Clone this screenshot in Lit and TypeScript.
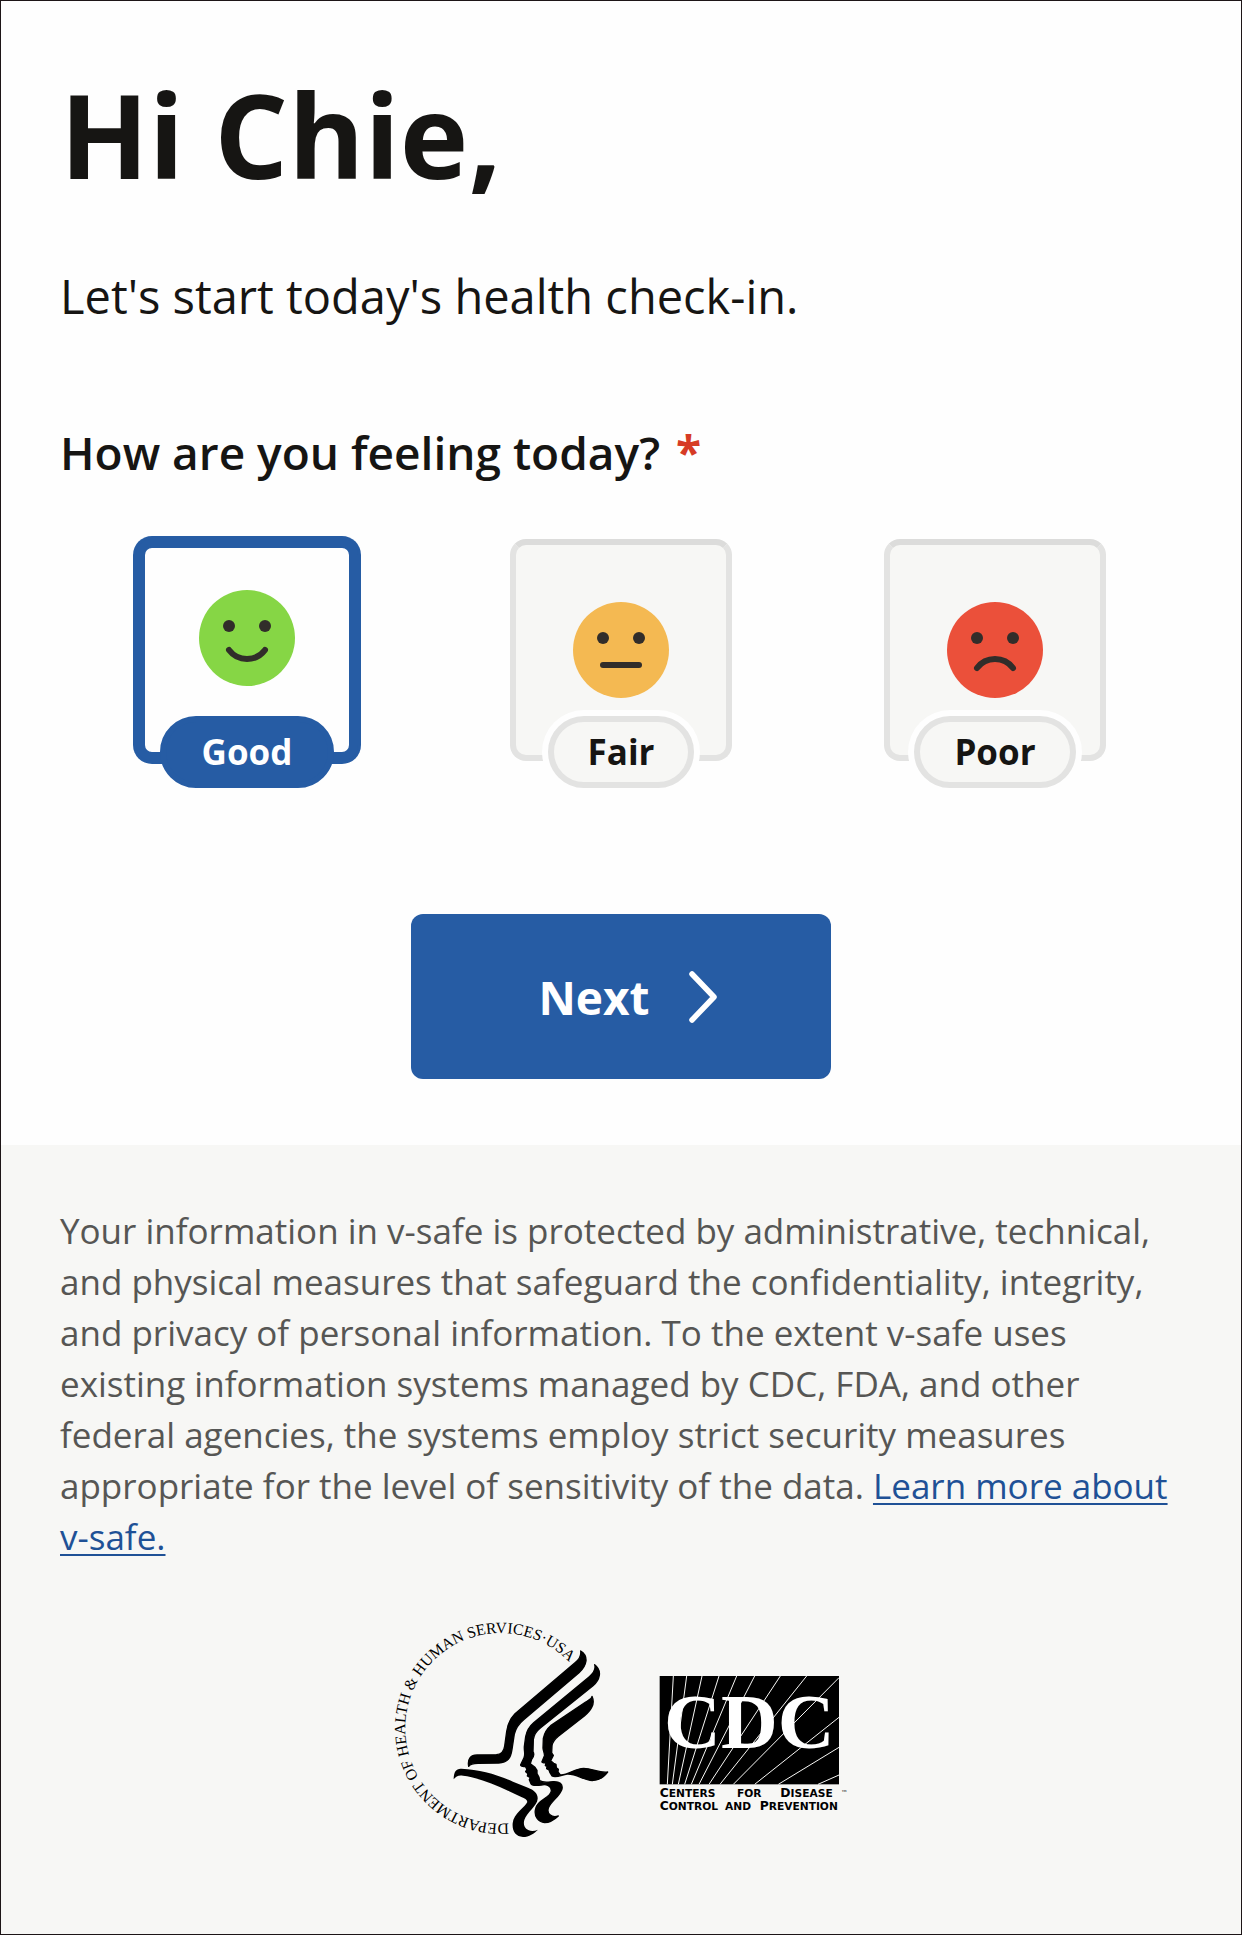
import { LitElement, html, css, svg } from "lit";
import { customElement, property, state } from "lit/decorators.js";

type Mood = "good" | "fair" | "poor";

const MOODS: { id: Mood; label: string }[] = [
  { id: "good", label: "Good" },
  { id: "fair", label: "Fair" },
  { id: "poor", label: "Poor" },
];

const MOUTHS: Record<Mood, string> = {
  good: "M30 60A22.5 22.5 0 0 0 66 60",
  fair: "M30 63H66",
  poor: "M30 66A22.5 22.5 0 0 1 66 66",
};

@customElement("mood-face")
export class MoodFace extends LitElement {
  static styles = css`
    :host {
      display: block;
      width: 96px;
      height: 96px;
    }
    .face {
      display: block;
      width: 100%;
      height: 100%;
    }
    .good {
      fill: #86d645;
    }
    .fair {
      fill: #f4b952;
    }
    .poor {
      fill: #eb503a;
    }
    .eye {
      fill: #312d2a;
    }
    .mouth {
      fill: none;
      stroke: #312d2a;
      stroke-width: 6;
      stroke-linecap: round;
    }
  `;

  @property() mood: Mood = "good";

  render() {
    return html`<svg class="face" viewBox="0 0 96 96" aria-hidden="true">
      <circle class=${this.mood} cx="48" cy="48" r="48"></circle>
      <circle class="eye" cx="30" cy="36" r="6"></circle>
      <circle class="eye" cx="66" cy="36" r="6"></circle>
      <path class="mouth" d=${MOUTHS[this.mood]}></path>
    </svg>`;
  }
}

const RAYS = [
  [85, 373, 103, 48],
  [100, 373, 143, 48],
  [118, 373, 189, 48],
  [137, 373, 240, 48],
  [157, 373, 293, 48],
  [180, 373, 347, 48],
  [210, 373, 424, 48],
  [243, 373, 503, 48],
  [283, 373, 600, 53],
  [347, 373, 600, 172],
  [418, 373, 600, 262],
  [537, 373, 600, 345],
];

@customElement("agency-logos")
export class AgencyLogos extends LitElement {
  static styles = css`
    :host {
      display: flex;
      justify-content: center;
      align-items: flex-end;
      gap: 46px;
    }
    .hhs {
      width: 220px;
      height: 220px;
      overflow: visible;
    }
    .cdc {
      width: 190px;
      height: 165px;
      overflow: visible;
    }
    .ring {
      font: 47px "Liberation Serif", serif;
    }
    .wing {
      stroke: #000;
      stroke-width: 4;
      stroke-linejoin: round;
    }
    .letters {
      font: bold 236px "Liberation Serif", serif;
      fill: #fff;
    }
    .initial {
      font: bold 37px "DejaVu Sans", sans-serif;
    }
    .rest {
      font-size: 32px;
    }
    .mark {
      font: 20px "DejaVu Sans", sans-serif;
    }
    .ray {
      stroke: #f7f7f5;
      stroke-width: 3;
    }
  `;

  render() {
    return html`
      <svg class="hhs" viewBox="40 60 660 660" role="img" aria-label="Department of Health &amp; Human Services USA">
        <defs>
          <path id="ring" d="M387 670A286 286 0 1 1 600 225"></path>
        </defs>
        <text class="ring"><textPath href="#ring">DEPARTMENT OF HEALTH &amp; HUMAN SERVICES·USA</textPath></text>
        <path
          class="wing"
          d="M603 153C615 160 620 170 619 183C617 197 611 207 598 218L432 359C415 373 408 386 404 402L397 448C393 475 384 488 357 489L295 490C278 490 271 493 267 499C263 477 273 465 292 465L350 464C367 463 373 453 375 438L381 395C384 372 390 357 406 341L586 188C602 176 605 166 603 153Z"
        ></path>
        <path
          class="wing"
          d="M645 194C657 203 661 212 659 226C657 238 651 248 640 257L482 384C467 396 463 405 461 418L460 455C465 464 461 472 456 478L452 491L466 502L472 511L472 521L478 532L480 542C490 549 505 546 520 545C540 544 550 551 547 567C541 588 515 603 507 622C499 640 516 655 536 648C523 660 512 668 495 668C475 665 464 650 467 630C470 600 512 595 515 573C516 558 500 551 485 555C470 557 455 558 453 549L449 539L452 533L443 528L445 521L438 515L442 508L437 499C428 501 422 497 423 494L433 473C438 462 433 454 434 440L438 410C441 393 448 380 462 368L629 230C642 219 649 207 645 194Z"
        ></path>
        <path
          class="wing"
          d="M637 289C641 298 642 312 636 322C632 330 624 339 614 348L536 409C524 419 518 425 517 438L516 459L521 466L513 482L522 490L529 493L530 503L536 508L535 516L542 525C565 527 585 505 612 505C640 506 660 520 684 516C674 529 661 542 638 542C610 540 590 520 562 522C545 525 530 534 517 528L511 518L508 510L501 506L502 499L497 497L499 488C492 490 486 487 487 485L494 468C496 460 490 452 490 444L491 415C494 400 500 388 513 377L618 306C632 298 637 296 637 289Z"
        ></path>
        <path
          d="M222 538C222 515 230 505 245 506C300 509 350 522 400 545L445 563C463 570 475 580 474 596C473 618 441 636 434 660C427 685 448 700 475 689C464 700 448 711 430 711C408 710 397 693 399 670C401 640 438 620 443 606C442 598 435 595 425 591L385 572C340 550 285 531 250 527C236 525 229 529 222 538Z"
        ></path>
      </svg>
      <svg class="cdc" viewBox="60 45 570 495" role="img" aria-label="CDC Centers for Disease Control and Prevention">
        <rect x="62" y="48" width="538" height="325"></rect>
        ${RAYS.map(([x1, y1, x2, y2]) => svg`<line class="ray" x1=${x1} y1=${y1} x2=${x2} y2=${y2}></line>`)}
        <text class="letters" x="331" y="265" text-anchor="middle">CDC</text>
        <text class="initial" x="62" y="412">C<tspan class="rest">ENTERS</tspan></text>
        <text class="initial" x="294" y="412"><tspan class="rest">FOR</tspan></text>
        <text class="initial" x="424" y="412">D<tspan class="rest">ISEASE</tspan></text>
        <text class="mark" x="606" y="404">™</text>
        <text class="initial" x="62" y="450">C<tspan class="rest">ONTROL</tspan></text>
        <text class="initial" x="258" y="450"><tspan class="rest">AND</tspan></text>
        <text class="initial" x="362" y="450">P<tspan class="rest">REVENTION</tspan></text>
      </svg>
    `;
  }
}

@customElement("app-root")
export class AppRoot extends LitElement {
  static styles = css`
    :host {
      display: block;
      font-family: "Open Sans", "Noto Sans", sans-serif;
      color: #161513;
    }
    * {
      box-sizing: border-box;
    }
    .page {
      display: flex;
      flex-direction: column;
      min-height: 100vh;
      border: 1px solid #1d1517;
      background: #fefefe;
    }
    .checkin {
      display: flex;
      flex-direction: column;
      padding: 73px 59px 66px;
    }
    .greeting {
      margin: 0 0 72px;
      font-size: 116px;
      line-height: 120px;
      font-weight: 700;
    }
    .intro {
      margin: 0 0 96px;
      font-size: 47px;
      line-height: 60px;
    }
    .question {
      margin: 0;
      padding: 0;
      border: 0;
      min-width: 0;
    }
    .prompt {
      padding: 0;
      margin-bottom: 57px;
      font-size: 46px;
      line-height: 60px;
      font-weight: 600;
    }
    .required {
      margin-left: 4px;
      font-weight: 700;
      color: #d63b25;
    }
    .options {
      display: grid;
      grid-template-columns: repeat(3, 1fr);
      justify-items: center;
    }
    .option {
      display: flex;
      flex-direction: column;
      align-items: center;
      position: relative;
      cursor: pointer;
    }
    .radio {
      position: absolute;
      opacity: 0;
      margin: 0;
    }
    .card {
      display: flex;
      align-items: center;
      justify-content: center;
      width: 222px;
      height: 222px;
      border: 6px solid #e3e3e2;
      border-top-color: #dcdcdb;
      border-radius: 16px;
      background: #f7f7f5;
    }
    .pill {
      margin-top: -45px;
      padding: 0 34px;
      border: 6px solid #e3e3e2;
      border-radius: 36px;
      background: #f7f7f5;
      box-shadow: 0 0 0 6px #fefefe;
      font-size: 35px;
      line-height: 60px;
      font-weight: 700;
    }
    .radio:checked + .card {
      padding-bottom: 24px;
      border: 9px solid #265ca4;
      background: #fefefe;
      box-shadow: 0 0 0 3px #265ca4;
    }
    .radio:checked ~ .pill {
      padding: 0 36px;
      border-color: #265ca4;
      background: #265ca4;
      box-shadow: none;
      color: #fff;
    }
    .radio:focus-visible + .card {
      outline: 3px solid #161513;
      outline-offset: 4px;
    }
    .next {
      display: flex;
      align-items: center;
      justify-content: center;
      gap: 39px;
      align-self: center;
      width: 420px;
      max-width: 100%;
      height: 165px;
      margin-top: 126px;
      padding: 0 0 0 13px;
      border: 0;
      border-radius: 12px;
      background: #265ca4;
      color: #fff;
      font: 700 46px "Open Sans", "Noto Sans", sans-serif;
      cursor: pointer;
    }
    .chevron {
      width: 28px;
      height: 52px;
      fill: none;
      stroke: currentColor;
      stroke-width: 5.5;
      stroke-linecap: round;
      stroke-linejoin: round;
    }
    .footer {
      flex: 1;
      display: flex;
      flex-direction: column;
      gap: 58px;
      padding: 60px 59px;
      background: #f7f7f5;
    }
    .notice {
      margin: 0;
      font-size: 35px;
      line-height: 51px;
      color: #565654;
    }
    .more {
      color: #1f5196;
      text-decoration-thickness: 2px;
      text-underline-offset: 4px;
    }
  `;

  @state() private mood: Mood = "good";

  render() {
    return html`
      <div class="page">
        <main class="checkin">
          <h1 class="greeting">Hi Chie,</h1>
          <p class="intro">Let's start today's health check-in.</p>
          <fieldset class="question">
            <legend class="prompt">How are you feeling today? <span class="required">*</span></legend>
            <div class="options">
              ${MOODS.map(
                (m) => html`<label class="option">
                  <input
                    class="radio"
                    type="radio"
                    name="mood"
                    value=${m.id}
                    .checked=${this.mood === m.id}
                    @change=${() => (this.mood = m.id)}
                  />
                  <span class="card"><mood-face .mood=${m.id}></mood-face></span>
                  <span class="pill">${m.label}</span>
                </label>`
              )}
            </div>
          </fieldset>
          <button class="next" type="button">
            Next
            <svg class="chevron" viewBox="0 0 28 52" aria-hidden="true"><path d="M3 3L25 26L3 49"></path></svg>
          </button>
        </main>
        <footer class="footer">
          <p class="notice">
            Your information in v-safe is protected by administrative, technical, and physical measures that safeguard
            the confidentiality, integrity, and privacy of personal information. To the extent v-safe uses existing
            information systems managed by CDC, FDA, and other federal agencies, the systems employ strict security
            measures appropriate for the level of sensitivity of the data.
            <a class="more" href="#">Learn more about v-safe.</a>
          </p>
          <agency-logos></agency-logos>
        </footer>
      </div>
    `;
  }
}
